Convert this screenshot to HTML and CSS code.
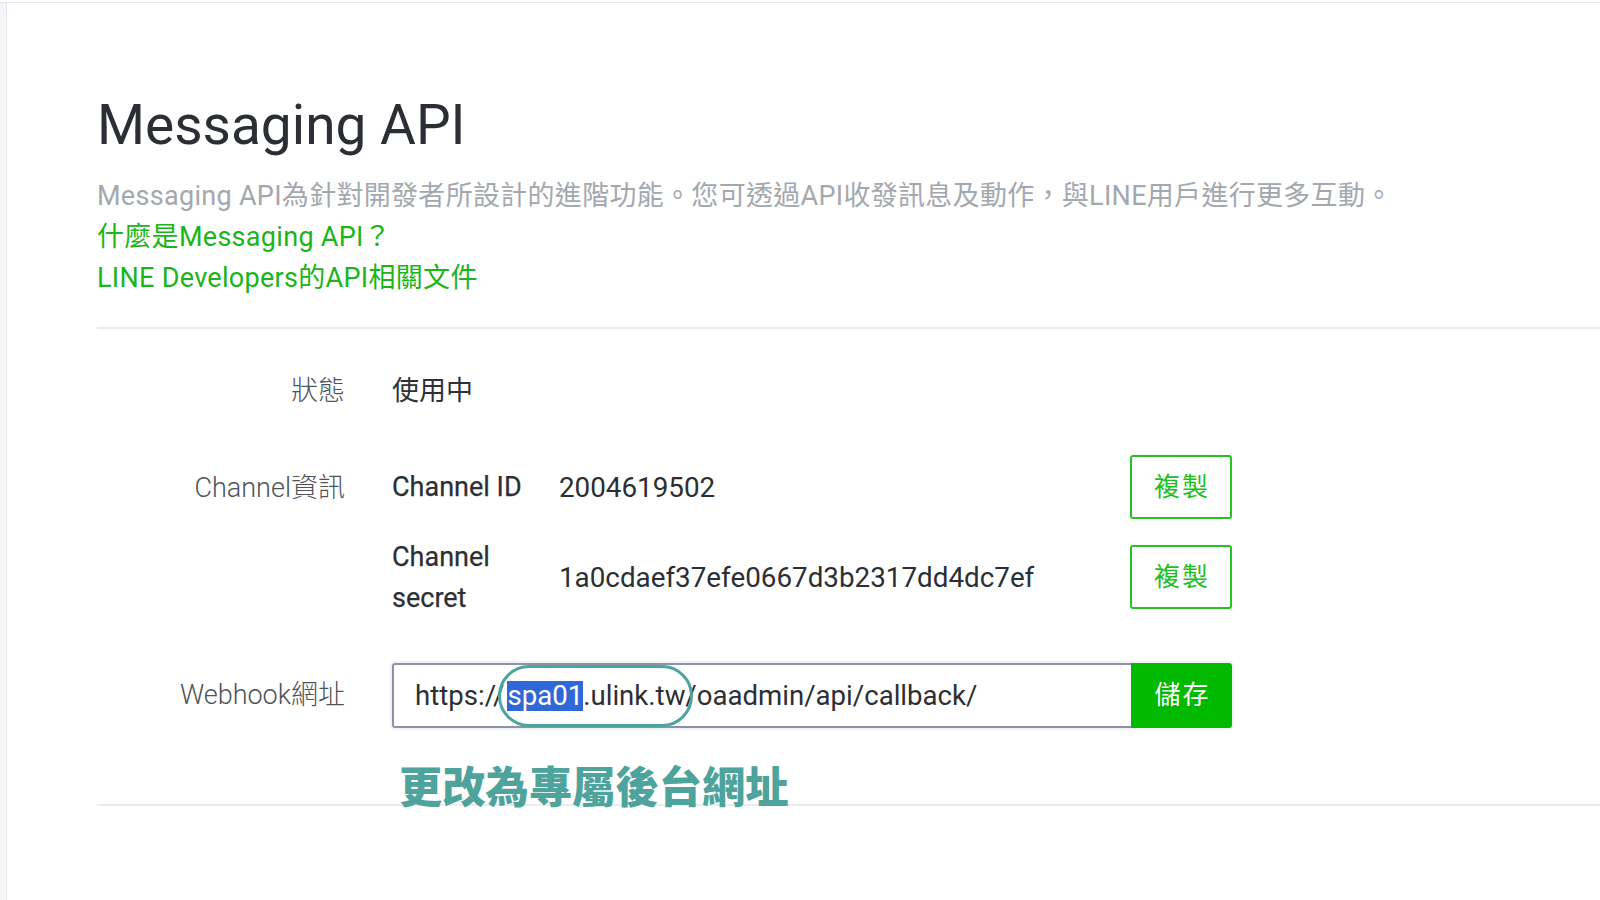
FILE: index.html
```html
<!DOCTYPE html>
<html lang="zh-Hant">
<head>
<meta charset="utf-8">
<title>Messaging API</title>
<link rel="stylesheet" href="styles.css">
</head>
<body>
<div class="page">
  <aside class="rail"></aside>
  <main class="content">
    <section class="intro">
      <h1 class="title">Messaging API</h1>
      <p class="desc">Messaging API為針對開發者所設計的進階功能。您可透過API收發訊息及動作，與LINE用戶進行更多互動。</p>
      <a class="link" href="#">什麼是Messaging API？</a>
      <a class="link" href="#">LINE Developers的API相關文件</a>
    </section>

    <section class="form">
      <div class="row row-status">
        <div class="label">狀態</div>
        <div class="value">使用中</div>
      </div>

      <div class="row row-channel">
        <div class="label label-top">Channel資訊</div>
        <div class="value channel-list">
          <div class="channel-item item-id">
            <div class="sub-label">Channel ID</div>
            <div class="sub-value">2004619502</div>
            <button class="btn-copy" type="button">複製</button>
          </div>
          <div class="channel-item item-secret">
            <div class="sub-label sub-label-wrap">Channel secret</div>
            <div class="sub-value">1a0cdaef37efe0667d3b2317dd4dc7ef</div>
            <button class="btn-copy" type="button">複製</button>
          </div>
        </div>
      </div>

      <div class="row row-webhook">
        <div class="label">Webhook網址</div>
        <div class="value webhook">
          <div class="field">
            <div class="input"><span>https://</span><span class="sel">spa01</span><span>.ulink.tw/oaadmin/api/callback/</span></div>
            <button class="btn-save" type="button">儲存</button>
          </div>
          <div class="mark-ring"></div>
          <div class="mark-note">更改為專屬後台網址</div>
        </div>
      </div>
    </section>

    <section class="next">
      <div class="next-title">回應設定</div>
      <div class="next-link">前往回應設定</div>
    </section>
  </main>
</div>
</body>
</html>
```

FILE: styles.css
```css
* { box-sizing: border-box; }

html, body {
  margin: 0;
  padding: 0;
  background: #ffffff;
  height: 100%;
  overflow: hidden;
}

body {
  font-family: Roboto, "Noto Sans CJK TC", "Noto Sans", sans-serif;
  color: #2c3036;
}

.page {
  display: flex;
  margin-top: 2px;
  border-top: 1px solid #e3e6ea;
  min-height: 897px;
}

.rail {
  width: 7px;
  flex: none;
  background: #f4f5f7;
  border-right: 1px solid #e4e6ea;
}

.content {
  flex: 1;
  padding-left: 90px;
}

.intro {
  padding-top: 88px;
  padding-bottom: 28px;
  border-bottom: 2px solid #ececec;
}

.title {
  margin: 0;
  font-size: 55px;
  line-height: 68px;
  font-weight: 400;
  color: #2b2f35;
}

.desc {
  margin: 16px 0 0;
  font-size: 27px;
  line-height: 42px;
  color: #a3a8af;
  white-space: nowrap;
  letter-spacing: 0.3px;
}

.link {
  display: block;
  font-size: 27px;
  line-height: 41px;
  color: #19b519;
  text-decoration: none;
  letter-spacing: 0.3px;
}

.form {
  padding-top: 42px;
  padding-bottom: 76px;
  border-bottom: 2px solid #ececec;
  display: flex;
  flex-direction: column;
}

.row {
  display: flex;
  align-items: center;
  font-size: 27px;
  line-height: 41px;
}

.row-channel { align-items: flex-start; margin-top: 43px; }
.row-webhook { margin-top: 44px; }

.label {
  width: 248px;
  flex: none;
  text-align: right;
  color: #4f5359;
  font-weight: 300;
}

.label-top { padding-top: 13px; }

.value {
  margin-left: 47px;
  width: 840px;
  color: #2e3237;
}

.channel-list {
  display: flex;
  flex-direction: column;
  gap: 16px;
}

.channel-item {
  display: flex;
  align-items: center;
}

.sub-label {
  width: 160px;
  flex: none;
  font-weight: 400;
  -webkit-text-stroke: 0.25px #2b2f35;
  color: #2b2f35;
  font-size: 27px;
}

.sub-label-wrap { padding-top: 2px; }

.sub-value {
  flex: 1;
  padding-left: 7px;
  font-size: 27.8px;
  color: #2b2f35;
}

.btn-copy {
  width: 102px;
  height: 64px;
  flex: none;
  display: flex;
  align-items: center;
  justify-content: center;
  border: 2px solid #25c325;
  border-radius: 3px;
  background: #fff;
  color: #1fbf1f;
  font-family: "Noto Sans CJK TC", sans-serif;
  font-size: 26px;
  line-height: 1;
  letter-spacing: 2px;
  padding: 0 0 4px 2px;
}

.webhook { position: relative; }

.field {
  display: flex;
  height: 65px;
  box-shadow: 0 0 0 2px #f1f2f4;
  border-radius: 3px;
}

.input {
  flex: 1;
  border: 2px solid #8d92a8;
  border-right: none;
  border-radius: 3px 0 0 3px;
  padding-left: 21px;
  display: flex;
  align-items: center;
  font-size: 27.6px;
  color: #2b2f35;
  white-space: nowrap;
}

.sel {
  background: #3068d8;
  color: #ffffff;
  line-height: 30px;
  margin-left: 3px;
}

.btn-save {
  width: 101px;
  flex: none;
  display: flex;
  align-items: center;
  justify-content: center;
  border: none;
  border-radius: 0 3px 3px 0;
  background: #00b900;
  color: #ffffff;
  font-family: "Noto Sans CJK TC", sans-serif;
  font-size: 26px;
  line-height: 1;
  letter-spacing: 2px;
  padding: 0 0 6px 2px;
}

.mark-ring {
  position: absolute;
  left: 106px;
  top: 2px;
  width: 195px;
  height: 62px;
  border: 3px solid #4ea59e;
  border-radius: 31px;
}

.mark-note {
  position: absolute;
  left: 7px;
  top: 96px;
  font-family: "Noto Sans CJK TC", sans-serif;
  font-size: 43.3px;
  line-height: 50px;
  font-weight: 900;
  color: #4ea39c;
  white-space: nowrap;
}

.next {
  display: flex;
  padding-top: 89px;
  font-size: 27px;
  line-height: 41px;
  color: #2b2f35;
}

.next-title { width: 371px; padding-left: 6px; }
.next-link { color: #2b2f35; }
```
